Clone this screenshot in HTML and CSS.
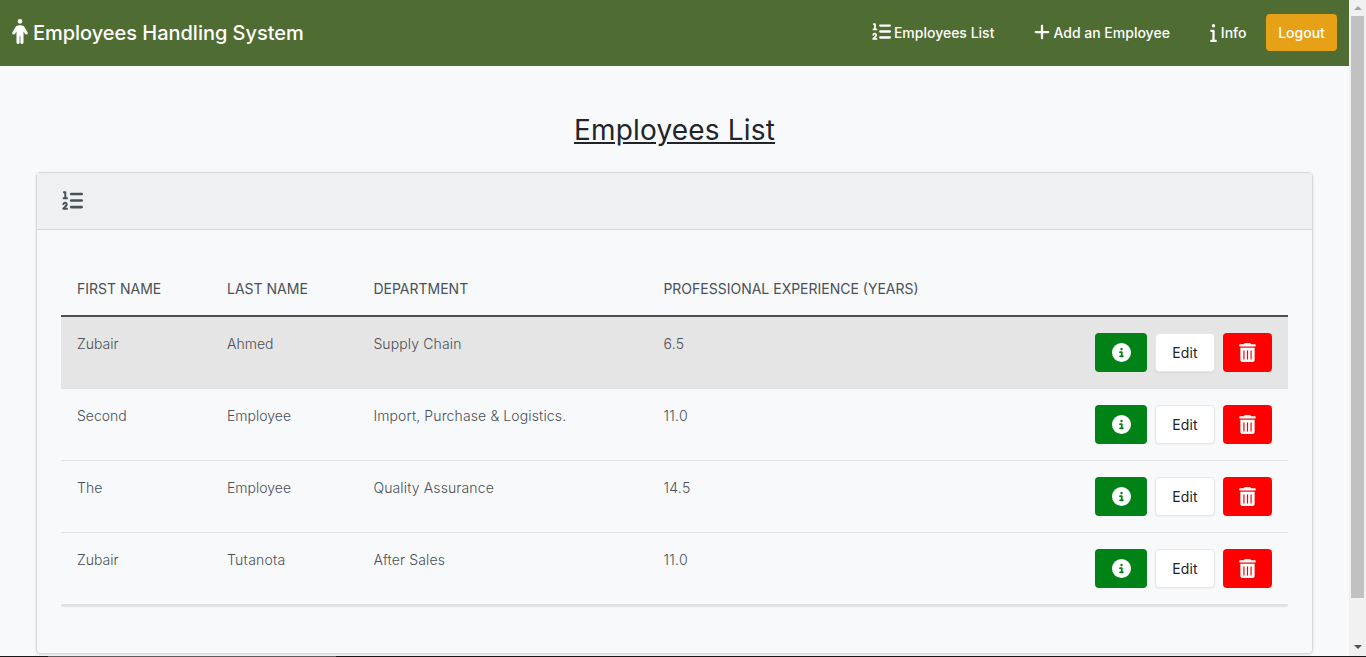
FILE: index.html
```html
<!DOCTYPE html>
<html lang="en">
<head>
<meta charset="utf-8">
<title>Employees Handling System</title>
<link rel="stylesheet" href="styles.css">
</head>
<body>
<svg class="defs" aria-hidden="true">
  <symbol id="person" viewBox="0 0 320 512"><path d="M112 48a48 48 0 1 1 96 0 48 48 0 1 1-96 0zm40 304V480c0 17.700-14.300 32-32 32s-32-14.300-32-32V256.900L59.400 304.500c-9.100 15.100-28.800 20-43.900 10.900s-20-28.800-10.900-43.900l58.300-97c17.400-28.900 48.600-46.600 82.300-46.600h29.700c33.700 0 64.900 17.700 82.300 46.600l58.300 97c9.100 15.100 4.200 34.800-10.900 43.900s-34.800 4.200-43.900-10.900L232 256.900V480c0 17.700-14.300 32-32 32s-32-14.300-32-32V352H152z"/></symbol>
  <symbol id="list" viewBox="0 0 512 512"><path d="M24 56c0-13.3 10.700-24 24-24H80c13.300 0 24 10.700 24 24V176h16c13.300 0 24 10.700 24 24s-10.700 24-24 24H40c-13.300 0-24-10.700-24-24s10.700-24 24-24H56V80H48C34.700 80 24 69.300 24 56zM86.700 341.200c-6.500-7.400-18.300-6.900-24 1.200L51.500 357.900c-7.700 10.800-22.700 13.300-33.500 5.600s-13.300-22.700-5.600-33.500l11.100-15.600c23.700-33.200 72.300-35.600 99.200-4.900c21.300 24.400 20.800 60.900-1.100 84.700L86.800 432H120c13.300 0 24 10.700 24 24s-10.700 24-24 24H32c-9.500 0-18.200-5.600-22-14.400s-2.100-18.900 4.300-25.900l72-78c5.300-5.800 5.400-14.600 .3-20.500zM224 64H480c17.700 0 32 14.300 32 32s-14.300 32-32 32H224c-17.700 0-32-14.300-32-32s14.300-32 32-32zm0 160H480c17.700 0 32 14.300 32 32s-14.300 32-32 32H224c-17.700 0-32-14.300-32-32s14.300-32 32-32zm0 160H480c17.700 0 32 14.300 32 32s-14.300 32-32 32H224c-17.700 0-32-14.300-32-32s14.300-32 32-32z"/></symbol>
  <symbol id="plus" viewBox="0 0 448 512"><path d="M256 80c0-17.700-14.300-32-32-32s-32 14.300-32 32V224H48c-17.700 0-32 14.300-32 32s14.300 32 32 32H192V432c0 17.700 14.300 32 32 32s32-14.300 32-32V288H400c17.700 0 32-14.300 32-32s-14.300-32-32-32H256V80z"/></symbol>
  <symbol id="info" viewBox="0 0 192 512"><path d="M48 48a48 48 0 1 1 96 0 48 48 0 1 1-96 0zM0 192c0-17.700 14.300-32 32-32H96c17.700 0 32 14.300 32 32V448h32c17.700 0 32 14.300 32 32s-14.300 32-32 32H32c-17.700 0-32-14.300-32-32s14.300-32 32-32H64V224H32c-17.700 0-32-14.300-32-32z"/></symbol>
  <symbol id="circle-info" viewBox="0 0 512 512"><path d="M256 512A256 256 0 1 0 256 0a256 256 0 1 0 0 512zM216 336h24V272H216c-13.300 0-24-10.700-24-24s10.700-24 24-24h48c13.300 0 24 10.700 24 24v88h8c13.300 0 24 10.700 24 24s-10.700 24-24 24H216c-13.300 0-24-10.700-24-24s10.700-24 24-24zm40-208a32 32 0 1 1 0 64 32 32 0 1 1 0-64z"/></symbol>
  <symbol id="trash" viewBox="0 0 448 512"><path d="M135.200 17.700C140.600 6.800 151.700 0 163.800 0H284.200c12.100 0 23.200 6.800 28.600 17.700L320 32h96c17.700 0 32 14.300 32 32s-14.300 32-32 32H32C14.300 96 0 81.700 0 64S14.300 32 32 32h96l7.200-14.300zM32 128H416V448c0 35.300-28.700 64-64 64H96c-35.300 0-64-28.700-64-64V128zm96 64c-8.800 0-16 7.200-16 16V432c0 8.800 7.200 16 16 16s16-7.200 16-16V208c0-8.800-7.200-16-16-16zm96 0c-8.800 0-16 7.200-16 16V432c0 8.800 7.200 16 16 16s16-7.200 16-16V208c0-8.800-7.200-16-16-16zm96 0c-8.800 0-16 7.200-16 16V432c0 8.800 7.200 16 16 16s16-7.200 16-16V208c0-8.800-7.200-16-16-16z"/></symbol>
</svg>
<div class="window">
  <div class="page">
    <header class="navbar">
      <a class="brand"><svg class="i-person"><use href="#person"/></svg><span>Employees Handling System</span></a>
      <nav class="nav">
        <a class="link"><svg class="i-list"><use href="#list"/></svg>Employees List</a>
        <a class="link"><svg class="i-plus"><use href="#plus"/></svg>Add an Employee</a>
        <a class="link"><svg class="i-info"><use href="#info"/></svg>Info</a>
        <a class="logout">Logout</a>
      </nav>
    </header>
    <main class="content">
      <h1 class="title">Employees List</h1>
      <section class="card">
        <div class="card-head"><svg class="i-head"><use href="#list"/></svg></div>
        <div class="card-body">
          <table class="table">
            <colgroup><col class="c1"><col class="c2"><col class="c3"><col class="c4"><col></colgroup>
            <thead><tr><th>FIRST NAME</th><th>LAST NAME</th><th>DEPARTMENT</th><th>PROFESSIONAL EXPERIENCE (YEARS)</th><th></th></tr></thead>
            <tbody>
              <tr class="hovered"><td>Zubair</td><td>Ahmed</td><td>Supply Chain</td><td>6.5</td><td><div class="actions"><a class="btn details"><svg class="i-circle"><use href="#circle-info"/></svg></a><a class="btn edit">Edit</a><a class="btn delete"><svg class="i-trash"><use href="#trash"/></svg></a></div></td></tr>
              <tr><td>Second</td><td>Employee</td><td>Import, Purchase &amp; Logistics.</td><td>11.0</td><td><div class="actions"><a class="btn details"><svg class="i-circle"><use href="#circle-info"/></svg></a><a class="btn edit">Edit</a><a class="btn delete"><svg class="i-trash"><use href="#trash"/></svg></a></div></td></tr>
              <tr><td>The</td><td>Employee</td><td>Quality Assurance</td><td>14.5</td><td><div class="actions"><a class="btn details"><svg class="i-circle"><use href="#circle-info"/></svg></a><a class="btn edit">Edit</a><a class="btn delete"><svg class="i-trash"><use href="#trash"/></svg></a></div></td></tr>
              <tr><td>Zubair</td><td>Tutanota</td><td>After Sales</td><td>11.0</td><td><div class="actions"><a class="btn details"><svg class="i-circle"><use href="#circle-info"/></svg></a><a class="btn edit">Edit</a><a class="btn delete"><svg class="i-trash"><use href="#trash"/></svg></a></div></td></tr>
            </tbody>
          </table>
        </div>
      </section>
    </main>
  </div>
  <aside class="scrollbar">
    <svg class="arrow up" viewBox="0 0 8 4"><path d="M4 0 8 4H0z"/></svg>
    <div class="thumb"></div>
    <svg class="arrow down" viewBox="0 0 8 4"><path d="M0 0h8L4 4z"/></svg>
  </aside>
</div>
<div class="edge"><span class="edge-light"></span></div>
</body>
</html>
```
FILE: styles.css
```css
* { box-sizing: border-box; }
body {
  margin: 0;
  height: 657px;
  overflow: hidden;
  display: flex;
  flex-direction: column;
  background: #f8f9fb;
  color: #495057;
  font: 400 14px/21px Inter, "Liberation Sans", sans-serif;
}
svg { display: block; fill: currentColor; flex: none; }
.defs { display: none; }
.window { display: flex; height: 656px; overflow: hidden; }
.page { flex: 1; }
.navbar {
  height: 66px;
  padding: 0 12px 2px;
  display: flex;
  align-items: center;
  justify-content: space-between;
  background: #4f6d32;
  color: #fff;
}
.brand { display: flex; align-items: center; gap: 5px; padding-top: 2px; font-size: 20px; line-height: 30px; font-weight: 500; letter-spacing: -.03px; }
.i-person { width: 16px; height: 25px; margin-top: -3px; }
.nav { display: flex; align-items: center; font-weight: 500; }
.link { display: flex; align-items: center; }
.link + .link { margin-left: 40px; }
.i-list { width: 19px; height: 19px; margin: -1px 3px 0 0; }
.i-plus { width: 16px; height: 18px; margin: 0 3px 0 0; }
.i-info { width: 7px; height: 18px; margin: 2px 4px 0 0; }
.logout {
  margin-left: 19.500px;
  width: 71px;
  height: 37px;
  line-height: 38px;
  text-align: center;
  border-radius: 4px;
  background: #e6a117;
}
.content { padding: 46px 36px 0; }
.title {
  margin: 0 0 24px;
  font-size: 28px;
  line-height: 36px;
  font-weight: 400;
  letter-spacing: .18px;
  text-align: center;
  text-decoration: underline;
  color: #212529;
}
.card {
  height: 482px;
  border: 1px solid #d7dadd;
  border-radius: 4px;
  box-shadow: 0 1px 3px rgba(0, 0, 0, .1);
}
.card-head {
  height: 57px;
  padding: 16px 25px;
  background: #eff0f2;
  border-bottom: 1px solid #d3d6d9;
}
.i-head { width: 21px; height: 21px; margin-top: 1px; color: #495057; }
.card-body { padding: 32px 24px; }
.table {
  width: 100%;
  border-collapse: separate;
  border-spacing: 0;
  table-layout: fixed;
  box-shadow: 0 2px 1px -1px rgba(0, 0, 0, .08);
  border-bottom: 1px solid #dee2e6;
}
.c1 { width: 150px; }
.c2 { width: 146.400px; }
.c3 { width: 290px; }
.c4 { width: 320px; }
th { height: 55px; padding: 0 16px 1px; text-align: left; font-weight: 400; border-bottom: 2px solid #495057; }
td { height: 72px; padding: 16px 16px 0; vertical-align: top; font-weight: 300; border-bottom: 1px solid #dee2e6; }
td:nth-child(3) { letter-spacing: .13px; }
td:nth-child(4) { letter-spacing: .3px; }
tr:last-child td:nth-child(2) { letter-spacing: .25px; }
.hovered td { background: #e5e5e5; }
.actions { display: flex; justify-content: flex-end; gap: 8px; letter-spacing: 0; }
.btn { display: flex; align-items: center; justify-content: center; height: 39px; border-radius: 4px; color: #fff; font-weight: 400; }
.details { width: 52px; background: #008217; }
.edit { width: 60px; background: #fff; color: #212529; border: 1px solid #e6e7e9; box-shadow: 0 1px 2px rgba(0, 0, 0, .05); letter-spacing: .1px; }
.delete { width: 49px; background: red; }
.i-circle { width: 19px; height: 19px; }
.i-trash { width: 17px; height: 19px; }
.scrollbar {
  width: 17px;
  padding: 6px 0;
  display: flex;
  flex-direction: column;
  align-items: center;
  background: #f1f1f1;
}
.arrow { width: 8px; height: 4px; }
.up { color: #a3a3a3; }
.down { color: #505050; margin-top: auto; margin-bottom: 1px; }
.thumb { width: 13px; height: 582px; margin-top: 6px; background: #c1c1c1; }
.edge { height: 1px; background: #17171c; padding-left: 48px; }
.edge-light { display: block; width: 288px; height: 1px; background: #5b5b60; }
```
